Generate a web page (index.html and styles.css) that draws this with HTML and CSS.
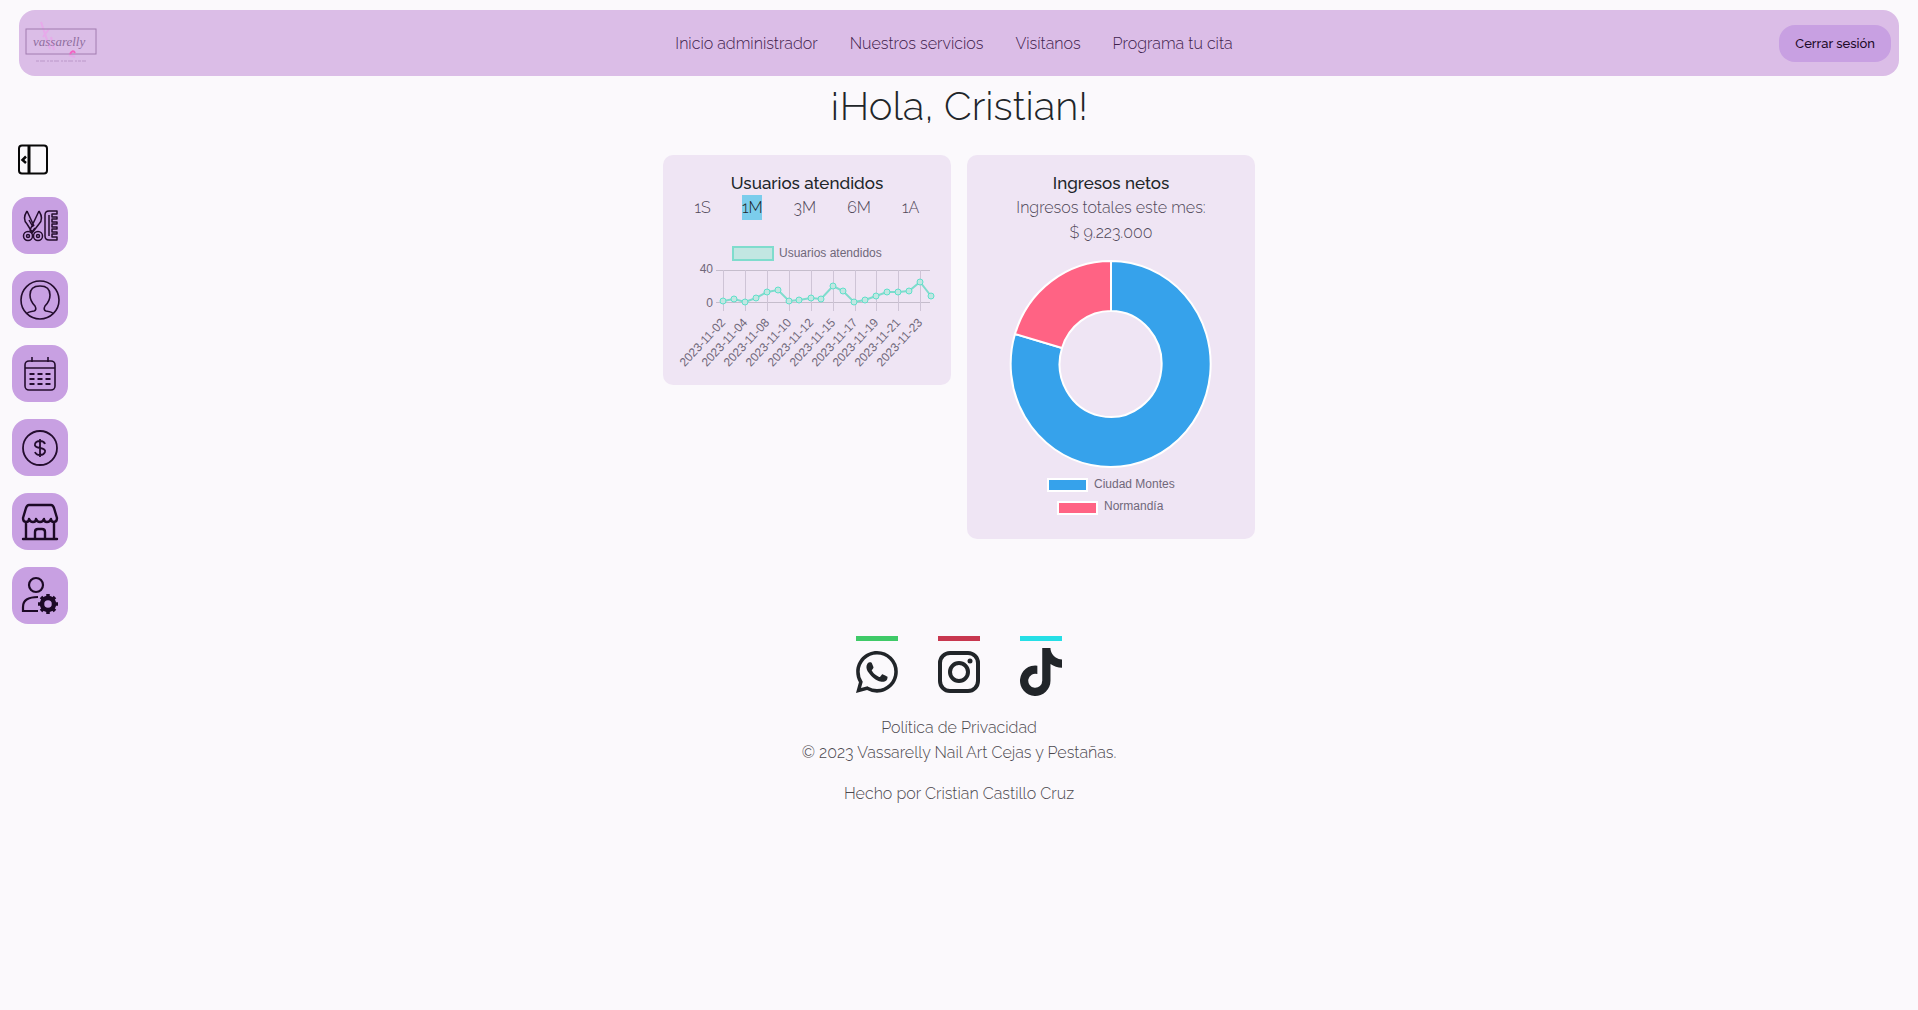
FILE: index.html
```html
<!DOCTYPE html>
<html lang="es">
<head>
<meta charset="utf-8">
<meta name="viewport" content="width=device-width, initial-scale=1">
<title>Vassarelly - Administrador</title>
<link rel="stylesheet" href="styles.css">
</head>
<body>
<header class="topbar">
  <a class="brand" href="#" aria-label="Vassarelly">
    <svg class="brand-logo" viewBox="0 0 72 48" aria-hidden="true">
      <g fill="none" stroke="#ee9cec" stroke-width="2" opacity=".6">
        <path d="M16 3l4 12 5 15M24 10l-6 8M26 18l3 13M44 36l6 2"/>
      </g>
      <rect x="1" y="10" width="70" height="25" fill="none" stroke="#a27db0"/>
      <text x="8" y="27" class="brand-name">vassarelly</text>
      <path d="M45 35q3-5 5-1" fill="none" stroke="#f263c2" stroke-width="2"/>
      <path d="M11 42h50" fill="none" stroke="#bb98c9" stroke-dasharray="3 1 5 2 2 1"/>
    </svg>
  </a>
  <nav class="nav">
    <a href="#">Inicio administrador</a>
    <a href="#">Nuestros servicios</a>
    <a href="#">Visítanos</a>
    <a href="#">Programa tu cita</a>
  </nav>
  <button class="logout" type="button">Cerrar sesión</button>
</header>

<div class="shell">
  <aside class="sidebar">
    <button class="toggle" type="button" aria-label="Contraer menú">
      <svg viewBox="0 0 30 30" fill="none" stroke="#080808" stroke-width="2"><rect x="1" y="1" width="28" height="28" rx="3"/><path d="M11 1v28" stroke-width="3"/><path d="M8 12L4.500 15.500l3.500 3" stroke-width="2.500"/></svg>
    </button>
    <a class="tile" href="#" aria-label="Servicios">
      <svg viewBox="0 0 40 40" fill="none" stroke="#240d2e" stroke-width="1.500" stroke-linejoin="round">
        <circle cx="8" cy="30" r="4.500"/><circle cx="8" cy="30" r="1.500"/><circle cx="18" cy="30" r="4.500"/><circle cx="18" cy="30" r="1.500"/>
        <path d="M7 5q-5 8 0 13l5 8 3-4M7 5l7 15M19 5q5 8 0 13l-7 9-2-3L19 5M9 14l4 7"/>
        <path d="M29 5h8v3h-5v3h5v2h-5v3h5v2h-5v3h5v2h-5v3h5v2h-5v3h5v3h-8q-4 0-4-4V9q0-4 4-4zM29 9v21"/>
      </svg>
    </a>
    <a class="tile" href="#" aria-label="Usuarios">
      <svg viewBox="0 0 40 40" fill="none" stroke="#240d2e" stroke-width="1.600">
        <circle cx="20" cy="20" r="19"/><path d="M7 34q0-2 7-3 3-1 1-5-5-5-5-11 0-9 10-9t10 9q0 6-5 11-2 4 1 5 7 1 7 3"/>
      </svg>
    </a>
    <a class="tile" href="#" aria-label="Citas">
      <svg viewBox="0 0 40 40" fill="none" stroke="#240d2e" stroke-width="1.600">
        <rect x="5" y="7" width="30" height="29" rx="4"/><path d="M5 14h30M12 3v5M28 3v5"/><path d="M9.500 20h5m3 0h5m3 0h5M9.500 25h5m3 0h5m3 0h5M9.500 30h5m3 0h5m3 0h5" stroke-width="2"/>
      </svg>
    </a>
    <a class="tile" href="#" aria-label="Ingresos">
      <svg viewBox="0 0 40 40" fill="none" stroke="#240d2e" stroke-width="1.800">
        <circle cx="20" cy="20" r="17"/><path d="M20 11v18M25 16q-1-3-5-3t-5 3 5 4 5 4-5 3-5-3"/>
      </svg>
    </a>
    <a class="tile" href="#" aria-label="Sedes">
      <svg viewBox="0 0 40 40" fill="none" stroke="#1c0925" stroke-width="2.400" stroke-linejoin="round" stroke-linecap="round">
        <path d="M9 3h22q2 0 3 3l3 10q0 4-3 4t-3-3q-1 3-4 3t-3-3q-1 3-4 3t-4-3q0 3-3 3t-4-3q0 3-3 3t-3-4L6 6q1-3 3-3zM6 20v17M34 20v17M3 37h34M15 37V30q0-3 3-3h4q3 0 3 3v7"/>
      </svg>
    </a>
    <a class="tile" href="#" aria-label="Administrar usuarios">
      <svg viewBox="0 0 40 40" fill="none" stroke="#1c0925" stroke-width="2.200">
        <circle cx="16" cy="9" r="7"/><path d="M18 21Q3 21 3 31v4h15"/>
        <circle cx="28" cy="28" r="6" stroke-width="4.500"/><path d="M28 18v3M28 35v3M18 28h3M35 28h3M21 21l2 2M33 33l2 2M35 21l-2 2M23 33l-2 2" stroke-width="3.500"/>
      </svg>
    </a>
  </aside>

  <main class="content">
    <h1 class="greeting">¡Hola, Cristian!</h1>
    <div class="cards">
      <section class="card">
        <h2 class="card-title">Usuarios atendidos</h2>
        <div class="periods">
          <button type="button">1S</button>
          <button type="button" class="active">1M</button>
          <button type="button">3M</button>
          <button type="button">6M</button>
          <button type="button">1A</button>
        </div>
        <svg class="line-chart" viewBox="0 -1 256 132" role="img" aria-label="Usuarios atendidos">
          <rect x="54" y="9" width="40" height="13" fill="#c2e6e2" stroke="#7fdccd" stroke-width="2"/>
          <text x="100" y="19" class="tick">Usuarios atendidos</text>
          <path d="M37 32.500h214M37 64.500h214" stroke="#c5bdcc" fill="none"/>
          <path d="M44.500 32v41M66.500 32v41M88.500 32v41M110.500 32v41M132.500 32v41M154.500 32v41M176.500 32v41M197.500 32v41M219.500 32v41M241.500 32v41" stroke="#cec4d6" fill="none"/>
          <text x="34" y="35" class="tick end">40</text>
          <text x="34" y="69" class="tick end">0</text>
          <polyline class="series" points="44,63 55,61 66,64 77,60 88,54 99,52 110,63 120,62 132,60 142,61 154,48 164,53 175,64 186,62 197,58 208,54 219,54 230,53 241,44 252,58"/>
          <g class="dots">
            <circle cx="44" cy="63" r="3"/><circle cx="55" cy="61" r="3"/><circle cx="66" cy="64" r="3"/><circle cx="77" cy="60" r="3"/><circle cx="88" cy="54" r="3"/><circle cx="99" cy="52" r="3"/><circle cx="110" cy="63" r="3"/><circle cx="120" cy="62" r="3"/><circle cx="132" cy="60" r="3"/><circle cx="142" cy="61" r="3"/><circle cx="154" cy="48" r="3"/><circle cx="164" cy="53" r="3"/><circle cx="175" cy="64" r="3"/><circle cx="186" cy="62" r="3"/><circle cx="197" cy="58" r="3"/><circle cx="208" cy="54" r="3"/><circle cx="219" cy="54" r="3"/><circle cx="230" cy="53" r="3"/><circle cx="241" cy="44" r="3"/><circle cx="252" cy="58" r="3"/>
          </g>
          <g class="tick end">
            <text transform="translate(47 85) rotate(-47)">2023-11-02</text>
            <text transform="translate(69 85) rotate(-47)">2023-11-04</text>
            <text transform="translate(91 85) rotate(-47)">2023-11-08</text>
            <text transform="translate(113 85) rotate(-47)">2023-11-10</text>
            <text transform="translate(135 85) rotate(-47)">2023-11-12</text>
            <text transform="translate(157 85) rotate(-47)">2023-11-15</text>
            <text transform="translate(179 85) rotate(-47)">2023-11-17</text>
            <text transform="translate(200 85) rotate(-47)">2023-11-19</text>
            <text transform="translate(222 85) rotate(-47)">2023-11-21</text>
            <text transform="translate(244 85) rotate(-47)">2023-11-23</text>
          </g>
        </svg>
      </section>

      <section class="card">
        <h2 class="card-title">Ingresos netos</h2>
        <p class="card-text">Ingresos totales este mes:<br>$ 9.223.000</p>
        <svg class="donut" viewBox="0 -1 256 268" role="img" aria-label="Ingresos por sede">
          <g stroke="#fff" stroke-width="2">
            <path fill="#36a2eb" d="M128 5A100 103 0 1 1 32 78L79 92A51 53 0 1 0 128 55z"/>
            <path fill="#ff6384" d="M128 5A100 103 0 0 0 32 78L79 92A51 53 0 0 1 128 55z"/>
            <rect x="65" y="223" width="39" height="12" fill="#36a2eb"/>
            <rect x="75" y="246" width="39" height="12" fill="#ff6384"/>
          </g>
          <text x="111" y="232" class="tick">Ciudad Montes</text>
          <text x="121" y="254" class="tick">Normandía</text>
        </svg>
      </section>
    </div>
  </main>
</div>

<footer class="footer">
  <div class="social">
    <a class="whatsapp" href="#" aria-label="WhatsApp">
      <svg viewBox="0 0 16 16" fill="#212529"><path d="M13.601 2.326A7.854 7.854 0 0 0 7.994 0C3.627 0 .068 3.558.064 7.926c0 1.399.366 2.760 1.057 3.965L0 16l4.204-1.102a7.933 7.933 0 0 0 3.790.965h.004c4.368 0 7.926-3.558 7.930-7.930A7.898 7.898 0 0 0 13.600 2.326zM7.994 14.521a6.573 6.573 0 0 1-3.356-.920l-.240-.144-2.494.654.666-2.433-.156-.251a6.560 6.560 0 0 1-1.007-3.505c0-3.626 2.957-6.584 6.591-6.584a6.560 6.560 0 0 1 4.660 1.931 6.557 6.557 0 0 1 1.928 4.660c-.004 3.639-2.961 6.592-6.592 6.592z"/><path d="M11.610 9.585c-.197-.099-1.170-.578-1.353-.646-.182-.065-.315-.099-.445.099-.133.197-.513.646-.627.775-.114.133-.232.148-.430.050-.197-.100-.836-.308-1.592-.985-.590-.525-.985-1.175-1.103-1.372-.114-.198-.011-.304.088-.403.087-.088.197-.232.296-.346.100-.114.133-.198.198-.330.065-.134.034-.248-.015-.347-.050-.099-.445-1.076-.612-1.470-.160-.389-.323-.335-.445-.340-.114-.007-.247-.007-.380-.007a.729.729 0 0 0-.529.247c-.182.198-.691.677-.691 1.654 0 .977.710 1.916.810 2.049.098.133 1.394 2.132 3.383 2.992.470.205.840.326 1.129.418.475.152.904.129 1.246.080.380-.058 1.171-.480 1.338-.943.164-.464.164-.860.114-.943-.049-.084-.182-.133-.380-.232z"/></svg>
    </a>
    <a class="instagram" href="#" aria-label="Instagram">
      <svg viewBox="0 0 42 42" fill="none" stroke="#212529" stroke-width="4"><rect x="2" y="2" width="38" height="38" rx="10"/><circle cx="21" cy="21" r="9"/><circle cx="32" cy="10" r="2.500" fill="#212529" stroke="none"/></svg>
    </a>
    <a class="tiktok" href="#" aria-label="TikTok">
      <svg viewBox="0 0 448 512" fill="#212529"><path d="M448 209.900a210.100 210.100 0 0 1-122.800-39.300v178.800A162.600 162.600 0 1 1 185 188.300v89.900a74.600 74.600 0 1 0 52.200 71.200V0h88a121.200 121.200 0 0 0 1.900 22.200 122.200 122.200 0 0 0 53.900 80.200 121.400 121.400 0 0 0 67 20.100z"/></svg>
    </a>
  </div>
  <p class="legal"><a href="#">Política de Privacidad</a><br>© 2023 Vassarelly Nail Art Cejas y Pestañas.</p>
  <p class="credit">Hecho por Cristian Castillo Cruz</p>
</footer>
</body>
</html>
```
FILE: styles.css
```css
* { box-sizing: border-box; }
body {
  margin: 0;
  padding: 10px 0 32px;
  min-height: 100vh;
  background: #fbf9fc;
  color: #212529;
  font: 300 16px/25px Raleway, Lato, sans-serif;
}
a { color: inherit; text-decoration: none; }
button { font: inherit; color: inherit; border: 0; background: none; padding: 0; cursor: pointer; }
h1, h2, p { margin: 0; font-weight: inherit; }
svg { display: block; }

.topbar {
  display: grid;
  grid-template-columns: 1fr auto 1fr;
  align-items: center;
  min-height: 66px;
  margin: 0 19px;
  padding: 0 8px 0 6px;
  border-radius: 16px;
  background: #dbbde7;
}
.brand { justify-self: start; }
.brand-logo { width: 72px; height: 48px; }
.brand-name { font: italic 300 13px "Liberation Serif", serif; fill: #8f6e9e; }
.nav { display: flex; gap: 32px; padding-right: 8px; color: #40214c; }
.logout {
  justify-self: end;
  padding: 6px 16px;
  border-radius: 16px;
  background: #c8a0e2;
  color: #1d0a28;
  font-size: 13px;
  font-weight: 500;
}

.shell { display: grid; grid-template-columns: 80px 1fr 80px; }
.sidebar {
  display: flex;
  flex-direction: column;
  align-items: flex-start;
  gap: 17px;
  padding: 68px 0 0 12px;
}
.toggle { margin: 0 0 5px 6px; }
.toggle svg { width: 30px; height: 31px; }
.tile {
  display: grid;
  place-items: center;
  width: 56px;
  height: 57px;
  border-radius: 16px;
  background: #c8a0e2;
}
.tile svg { width: 40px; height: 40px; }

.greeting { padding: 4px 0 23px; font-size: 40px; line-height: 52px; text-align: center; }
.cards { display: flex; justify-content: center; align-items: flex-start; gap: 16px; }
.card {
  width: 288px;
  padding: 16px;
  border-radius: 10px;
  background: #efe5f4;
  text-align: center;
}
.card-title { font-size: 17px; line-height: 24px; font-weight: 500; }
.card-text { color: #4f4858; }
.periods { display: flex; justify-content: space-around; color: #4f4858; }
.active { background: #7bcdec; color: #212529; }
.line-chart { width: 100%; margin-top: 17px; overflow: visible; }
.donut { width: 100%; margin-top: 10px; }
.tick { font: 12px "Liberation Sans", Arial, sans-serif; fill: #70687a; }
.end { text-anchor: end; }
.series { fill: none; stroke: #7fdccd; stroke-width: 2; }
.dots { fill: #c2e6e2; stroke: #5fe0ca; }

.footer { padding-top: 12px; text-align: center; color: #4b484e; }
.social { display: flex; justify-content: center; gap: 40px; }
.social a { display: grid; place-items: center; width: 42px; height: 67px; border-top: 5px solid; }
.social svg { width: 42px; height: 44px; }
.social .tiktok svg { height: 50px; }
.social .whatsapp { border-color: #3fca68; }
.social .instagram { border-color: #c8374f; }
.social .tiktok { border-color: #25dfe6; }
.legal { padding-top: 12px; }
.credit { padding-top: 16px; }
```
